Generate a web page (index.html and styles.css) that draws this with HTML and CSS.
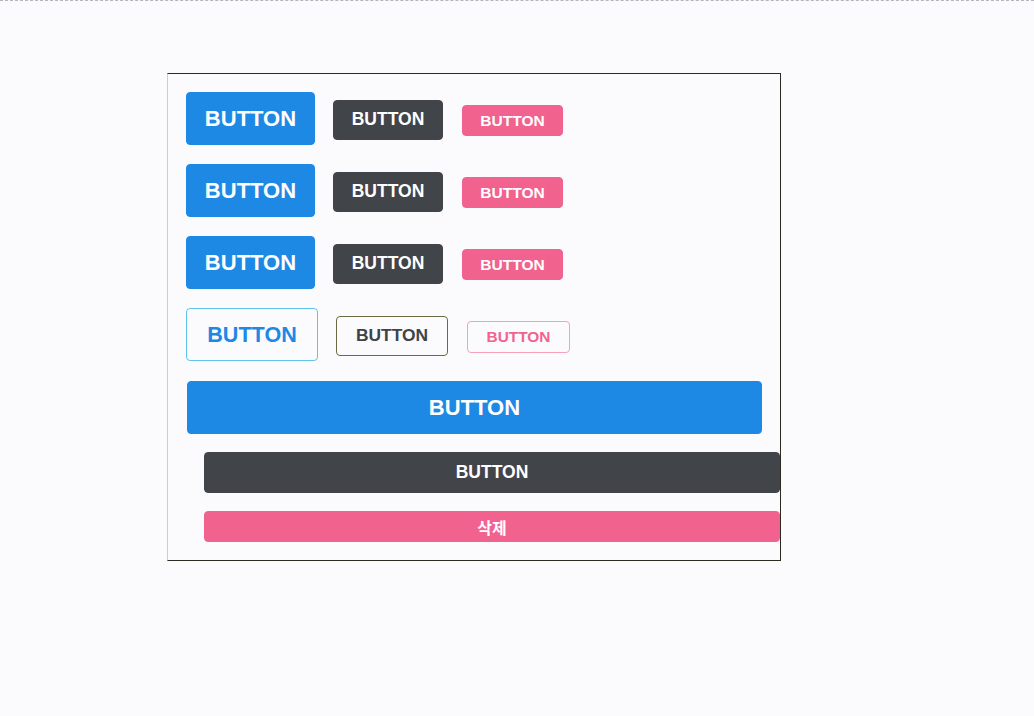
FILE: index.html
```html
<!DOCTYPE html>
<html lang="ko">
<head>
<meta charset="utf-8">
<title>Buttons</title>
<link rel="stylesheet" href="styles.css">
</head>
<body>
<div class="topline"></div>
<div class="panel">
  <div class="row">
    <button class="btn lg fill-blue">BUTTON</button>
    <button class="btn md fill-dark">BUTTON</button>
    <button class="btn sm fill-pink">BUTTON</button>
  </div>
  <div class="row">
    <button class="btn lg fill-blue">BUTTON</button>
    <button class="btn md fill-dark">BUTTON</button>
    <button class="btn sm fill-pink">BUTTON</button>
  </div>
  <div class="row">
    <button class="btn lg fill-blue">BUTTON</button>
    <button class="btn md fill-dark">BUTTON</button>
    <button class="btn sm fill-pink">BUTTON</button>
  </div>
  <div class="row">
    <button class="btn lg-o line-blue">BUTTON</button>
    <button class="btn md-o line-dark">BUTTON</button>
    <button class="btn sm-o line-pink">BUTTON</button>
  </div>
  <button class="btn block-lg fill-blue">BUTTON</button>
  <button class="btn block-md fill-dark shifted">BUTTON</button>
  <button class="btn block-sm fill-pink shifted">삭제</button>
</div>
</body>
</html>
```
FILE: styles.css
```css
html, body {
  margin: 0;
  padding: 0;
  background: #fbfbfd;
}
body {
  font-family: "Liberation Sans", Arial, "Noto Sans CJK KR", sans-serif;
  height: 716px;
  overflow: hidden;
}
.topline {
  height: 0;
  border-top: 1px dashed #b4b4bc;
}
.panel {
  box-sizing: border-box;
  width: 614px;
  margin: 72px 0 0 167px;
  padding: 18px;
  border: 1px solid #2a2a20;
  border-left-color: #e8e030;
  display: flex;
  flex-direction: column;
  gap: 19px;
}
.row {
  display: flex;
  align-items: center;
  gap: 18px;
  height: 53px;
}
.row .btn + .btn + .btn {
  margin-left: 1px;
}
.btn {
  box-sizing: border-box;
  border: 1px solid transparent;
  border-radius: 4px;
  padding: 0;
  margin: 0;
  font-family: "Liberation Sans", Arial, "Noto Sans CJK KR", sans-serif;
  font-weight: bold;
  color: #fff;
  display: flex;
  align-items: center;
  justify-content: center;
  flex: none;
  cursor: pointer;
}
.lg { width: 129px; height: 53px; font-size: 22px; }
.md { width: 110px; height: 40px; font-size: 17.5px; margin-top: 2px; }
.sm { width: 101px; height: 31px; font-size: 15.5px; margin-top: 4px; }
.lg-o { width: 132px; height: 53px; font-size: 21.6px; }
.md-o { width: 112px; height: 40px; font-size: 17.4px; margin-top: 2px; }
.sm-o { width: 103px; height: 32px; font-size: 15.4px; margin-top: 4px; }

.fill-blue { background: #1e88e5; border-color: #1e88e5; }
.fill-dark { background: #414549; border-color: #414549; }
.fill-pink { background: #f2628f; border-color: #f2628f; }

.line-blue { background: transparent; color: #1e88e5; border-color: #5ec4ea; }
.line-dark { background: transparent; color: #3f4347; border-color: #6a6a40; }
.line-pink { background: transparent; color: #f2628f; border-color: #f7a0b8; }

.block-lg { width: 575px; height: 53px; font-size: 22px; margin-top: 1px; margin-left: 1px; }
.block-md { width: 576px; height: 41px; font-size: 17.5px; margin-top: -1px; }
.block-sm { width: 576px; height: 31px; font-size: 16px; margin-top: -1px; }
.shifted { margin-left: 18px; }
```
